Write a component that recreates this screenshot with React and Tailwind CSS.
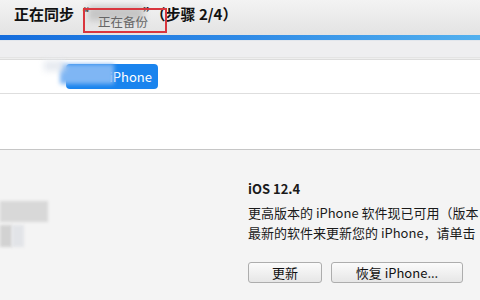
export default function App() {
  const font = { fontFamily: '"Noto Sans CJK SC", "Noto Sans", sans-serif' };
  return (
    <div className="w-[480px] h-[300px] overflow-hidden flex flex-col bg-[#f4f4f4] text-[#1a1a1a]" style={font}>
      {/* header */}
      <div className="relative h-[35px] shrink-0 bg-gradient-to-b from-[#f3f3f3] to-[#e3e3e3] px-[14px] pt-[4px]">
        <div className="text-[15px] leading-[20px] font-bold whitespace-nowrap text-[#111]">
          正在同步“<span className="inline-block w-[54px]"></span>”（步骤 2/4）
        </div>
        <div className="absolute left-[88px] top-[6px] w-[56px] h-[15px] bg-[#c6c6c6] blur-[3px]"></div>
        <div className="absolute left-[83px] top-[8px] w-[84px] h-[25px] border-2 border-[#d9363e] flex items-end justify-center pb-[1px]">
          <span className="text-[12.5px] leading-[16px] text-[#666] mr-[4px]">正在备份</span>
        </div>
      </div>
      {/* progress */}
      <div className="h-[5px] shrink-0 bg-gradient-to-r from-[#146cdc] via-[#2f8ae6] to-[#52b0ee]"></div>
      <div className="h-[17px] shrink-0 bg-[#eeeef0] border-t border-[#e2e6ec]"></div>
      <div className="h-[3px] shrink-0 bg-[#eeeeee] border-t border-[#e4e4e4] border-b border-b-[#dcdcdc]"></div>
      {/* device row */}
      <div className="h-[34px] shrink-0 bg-white border-b border-[#dedede] flex items-center pl-[66px]">
        <div className="relative h-[25px] w-[92px] rounded-[4px] bg-[#1a84ee] flex items-center justify-end pr-[6px]">
          <span className="text-white text-[13px] leading-[16px]">iPhone</span>
          <div className="absolute -left-[6px] top-[0px] w-[54px] h-[20px] bg-[#7fb6f4] blur-[2px]"></div>
          <div className="absolute -left-[22px] -top-[3px] w-[20px] h-[10px] bg-[#e6eaf0] blur-[3px]"></div>
        </div>
      </div>
      <div className="h-[56px] shrink-0 bg-white border-b border-[#c6c6c6]"></div>
      {/* bottom */}
      <div className="flex-1 flex">
        <div className="w-[248px] shrink-0 flex flex-col pt-[51px] gap-[3px]">
          <div className="w-[48px] h-[21px] bg-[#d8d8d8] blur-[1.5px]"></div>
          <div className="flex">
            <div className="w-[12px] h-[22px] bg-[#d2d2d2] blur-[1.5px]"></div>
            <div className="w-[12px] h-[22px] bg-[#e2e4e8] blur-[1.5px]"></div>
          </div>
        </div>
        <div className="flex-1 min-w-0 pt-[29px] whitespace-nowrap overflow-hidden text-[13px] leading-[20px] text-[#1a1a1a]">
          <div className="font-bold">iOS 12.4</div>
          <div className="mt-[4px]">更高版本的 iPhone 软件现已可用（版本</div>
          <div>最新的软件来更新您的 iPhone，请单击</div>
          <div className="flex gap-[9px] mt-[19px]">
            <button className="w-[74px] h-[21px] rounded-[3px] border border-[#adadad] bg-gradient-to-b from-[#fbfbfb] to-[#e6e6e6] text-[13px] leading-[18px] text-[#111]">更新</button>
            <button className="w-[132px] h-[21px] rounded-[3px] border border-[#adadad] bg-gradient-to-b from-[#fbfbfb] to-[#e6e6e6] text-[13px] leading-[18px] text-[#111]">恢复 iPhone...</button>
          </div>
        </div>
      </div>
    </div>
  );
}
